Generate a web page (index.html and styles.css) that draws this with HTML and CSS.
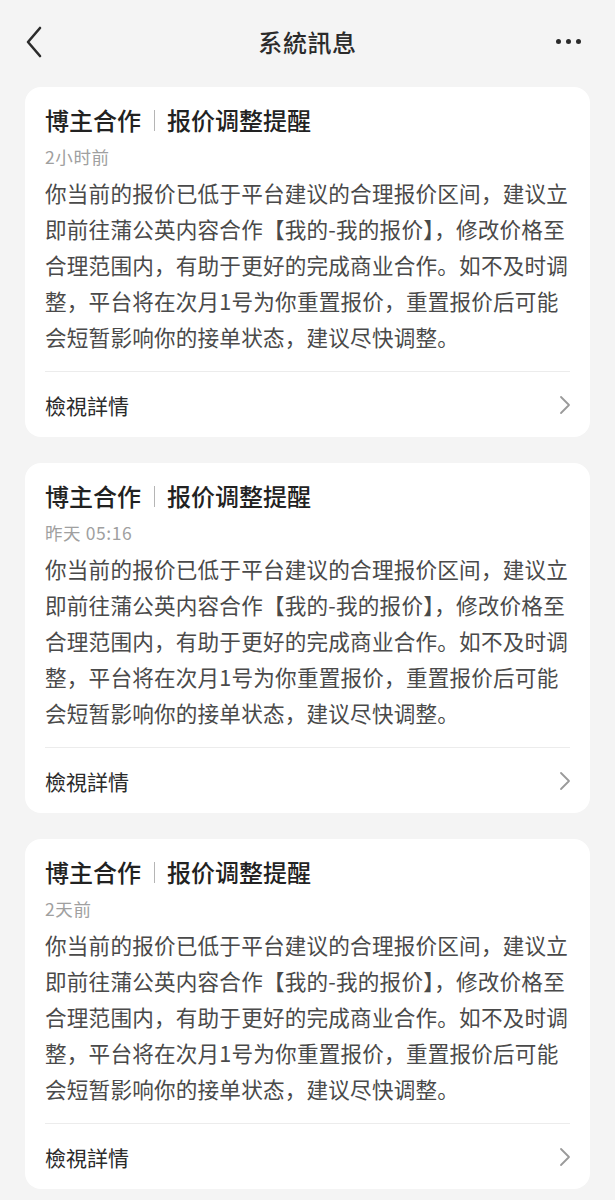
FILE: index.html
```html
<!DOCTYPE html>
<html lang="zh">
<head>
<meta charset="utf-8">
<link rel="stylesheet" href="styles.css">
</head>
<body>
<header class="nav">
  <span class="nav-back">
    <svg width="20" height="32" viewBox="0 0 20 32"><path d="M16 2 L4 16 L16 30" fill="none" stroke="#2b2b2b" stroke-width="2.6" stroke-linecap="round" stroke-linejoin="round"/></svg>
  </span>
  <h1 class="nav-title">系統訊息</h1>
  <span class="nav-more"><i></i><i></i><i></i></span>
</header>
<main class="list">
  <section class="card">
    <h2 class="card-title">博主合作<span class="sep"></span>报价调整提醒</h2>
    <div class="card-time">2小时前</div>
    <p class="card-body"><span>你当前的报价已低于平台建议的合理报价区间，建议立</span><span>即前往蒲公英内容合作【我的-我的报价】，修改价格至</span><span>合理范围内，有助于更好的完成商业合作。如不及时调</span><span>整，平台将在次月1号为你重置报价，重置报价后可能</span><span>会短暂影响你的接单状态，建议尽快调整。</span></p>
    <div class="card-foot"><span>檢視詳情</span><svg width="12" height="20" viewBox="0 0 12 20"><path d="M2 2 L10 10 L2 18" fill="none" stroke="#9a9a9a" stroke-width="1.8" stroke-linecap="round" stroke-linejoin="round"/></svg></div>
  </section>
  <section class="card">
    <h2 class="card-title">博主合作<span class="sep"></span>报价调整提醒</h2>
    <div class="card-time">昨天 05:16</div>
    <p class="card-body"><span>你当前的报价已低于平台建议的合理报价区间，建议立</span><span>即前往蒲公英内容合作【我的-我的报价】，修改价格至</span><span>合理范围内，有助于更好的完成商业合作。如不及时调</span><span>整，平台将在次月1号为你重置报价，重置报价后可能</span><span>会短暂影响你的接单状态，建议尽快调整。</span></p>
    <div class="card-foot"><span>檢視詳情</span><svg width="12" height="20" viewBox="0 0 12 20"><path d="M2 2 L10 10 L2 18" fill="none" stroke="#9a9a9a" stroke-width="1.8" stroke-linecap="round" stroke-linejoin="round"/></svg></div>
  </section>
  <section class="card">
    <h2 class="card-title">博主合作<span class="sep"></span>报价调整提醒</h2>
    <div class="card-time">2天前</div>
    <p class="card-body"><span>你当前的报价已低于平台建议的合理报价区间，建议立</span><span>即前往蒲公英内容合作【我的-我的报价】，修改价格至</span><span>合理范围内，有助于更好的完成商业合作。如不及时调</span><span>整，平台将在次月1号为你重置报价，重置报价后可能</span><span>会短暂影响你的接单状态，建议尽快调整。</span></p>
    <div class="card-foot"><span>檢視詳情</span><svg width="12" height="20" viewBox="0 0 12 20"><path d="M2 2 L10 10 L2 18" fill="none" stroke="#9a9a9a" stroke-width="1.8" stroke-linecap="round" stroke-linejoin="round"/></svg></div>
  </section>
</main>
</body>
</html>
```
FILE: styles.css
```css
* { box-sizing: border-box; }
html, body {
  margin: 0;
  padding: 0;
  background: #f4f4f4;
  font-family: "Noto Sans CJK SC", "Noto Sans CJK TC", "Noto Sans", sans-serif;
  color: #2b2b2b;
}
.nav {
  height: 87px;
  display: flex;
  align-items: center;
  justify-content: space-between;
  padding: 0 34px 4px 24px;
}
.nav-back { display: flex; width: 60px; }
.nav-title {
  margin: 0;
  font-size: 24px;
  font-weight: 500;
  letter-spacing: 0.6px;
  color: #2b2b2b;
}
.nav-more { display: flex; gap: 5px; width: 50px; justify-content: flex-end; }
.nav-more i {
  width: 5px; height: 5px; border-radius: 50%;
  background: #2b2b2b; display: block;
}
.list {
  display: flex;
  flex-direction: column;
  gap: 26px;
  padding: 0 25px;
}
.card {
  background: #fff;
  border-radius: 16px;
  padding: 18px 20px 0;
}
.card-title {
  margin: 0;
  font-size: 24px;
  line-height: 30px;
  font-weight: 500;
  color: #222;
  display: flex;
  align-items: center;
}
.sep {
  display: inline-block;
  width: 1px;
  height: 21px;
  background: #b5b5b5;
  margin: 0 12px 0 13px;
}
.card-time {
  margin-top: 10px;
  font-size: 17.5px;
  line-height: 24px;
  letter-spacing: 0.6px;
  color: #a0a0a0;
}
.card-body {
  margin: 6px 0 0;
  font-size: 21.6px;
  letter-spacing: 0.2px;
  line-height: 36px;
  color: #4a4a4a;
  padding-bottom: 16px;
  border-bottom: 1px solid #ececec;
}
.card-body span {
  display: block;
  white-space: nowrap;
}
.card-foot {
  height: 65px;
  display: flex;
  align-items: center;
  justify-content: space-between;
  font-size: 21px;
  color: #2b2b2b;
}
.card-foot svg { margin-right: -1px; }
```
